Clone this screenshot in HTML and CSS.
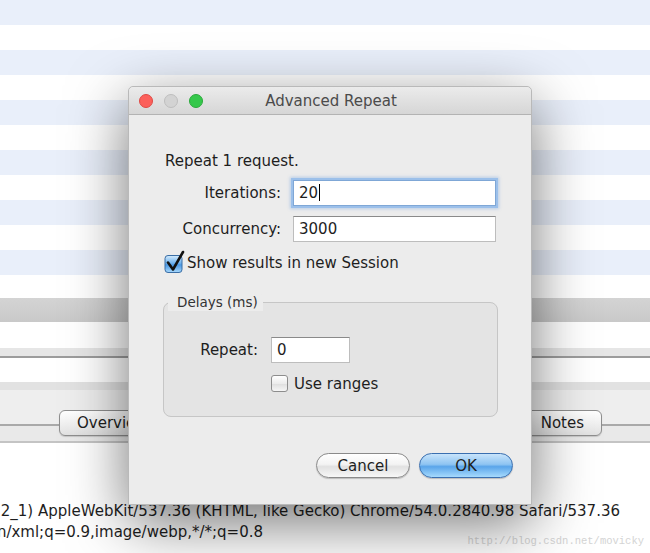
FILE: index.html
```html
<!DOCTYPE html>
<html lang="en">
<head>
    <meta charset="UTF-8">
    <title>Advanced Repeat</title>
    <link rel="stylesheet" href="styles.css">
</head>
<body>

    <div class="app">
        <div class="session-list"></div>
        <div class="splitter"></div>
        <div class="url-row"></div>
        <div class="toolbar"></div>
        <div class="blank-row"></div>
        <div class="tab-strip">
            <div class="tab">Overview</div>
            <div class="tab">Request</div>
            <div class="tab">Response</div>
            <div class="tab">Notes</div>
        </div>
        <div class="detail">
            <div class="ua-line line-1"><span>User-Agent Mozilla/5.0 (Macintosh; Intel Mac OS X 10_12_1) AppleWebKit/537.36 (KHTML, like Gecko) Chrome/54.0.2840.98 Safari/537.36</span></div>
            <div class="ua-line line-2"><span>Accept text/html,application/xhtml+xml,application/xml;q=0.9,image/webp,*/*;q=0.8</span></div>
        </div>
    </div>

    <div class="watermark">http://blog.csdn.net/movicky</div>

    <!-- the modal window -->
    <div class="dialog">
        <div class="titlebar">
            <div class="lights">
                <span class="light close"></span>
                <span class="light minimize"></span>
                <span class="light zoom"></span>
            </div>
            <div class="title">Advanced Repeat</div>
        </div>

        <div class="dialog-body">
            <div class="intro">Repeat 1 request.</div>

            <div class="form-row row-iterations">
                <label class="form-label">Iterations:</label>
                <div class="text-field focused">20<span class="caret"></span></div>
            </div>
            <div class="form-row row-concurrency">
                <label class="form-label">Concurrency:</label>
                <div class="text-field">3000</div>
            </div>

            <div class="check-row">
                <svg class="check-on" width="22" height="23" viewBox="0 0 22 23">
                    <defs>
                        <linearGradient id="aqua" x1="0" y1="0" x2="0" y2="1">
                            <stop offset="0" stop-color="#d6ecfd"/>
                            <stop offset="0.45" stop-color="#6fb2ee"/>
                            <stop offset="0.55" stop-color="#4a98e4"/>
                            <stop offset="1" stop-color="#a8d8fb"/>
                        </linearGradient>
                    </defs>
                    <rect x="2" y="5.5" width="17" height="17" rx="3" fill="url(#aqua)" stroke="#3b6ea5"/>
                    <path d="M5 12.5 L10 19.5 L20 2" fill="none" stroke="#111" stroke-width="2.6" stroke-linecap="round" stroke-linejoin="round"/>
                </svg>
                <span>Show results in new Session</span>
            </div>

            <fieldset class="group">
                <legend>Delays (ms)</legend>
                <div class="form-row row-delay">
                    <label class="form-label small-label">Repeat:</label>
                    <div class="text-field short">0</div>
                </div>
                <div class="check-row ranges">
                    <span class="check-off"></span>
                    <span>Use ranges</span>
                </div>
            </fieldset>

            <div class="buttons">
                <button class="btn">Cancel</button>
                <button class="btn default">OK</button>
            </div>
        </div>
    </div>

</body>
</html>
```

FILE: styles.css
```css
body {
    margin: 0;
    width: 650px;
    height: 553px;
    overflow: hidden;
    font-family: "DejaVu Sans", sans-serif;
    font-size: 15px;
    color: #1e1e1e;
    background: #fff;
}
.app {
    display: flex;
    flex-direction: column;
}
.session-list {
    height: 298px;
    background: repeating-linear-gradient(to bottom, #e9effa 0px, #e9effa 25px, #fff 25px, #fff 50px);
}
.splitter {
    height: 24px;
    background: linear-gradient(#d4d4d4, #c9c9c9);
}
.url-row {
    height: 26px;
    background: #fff;
}
.toolbar {
    height: 8px;
    background: #e6e6e6;
    border-bottom: 2px solid #9c9c9c;
}
.blank-row {
    height: 24px;
    background: #fff;
}
.tab-strip {
    height: 61px;
    box-sizing: border-box;
    padding: 28px 48px 0 59px;
    display: flex;
    justify-content: space-between;
    align-items: flex-start;
    background: linear-gradient(to bottom,
        #e2e2e2 0px, #e2e2e2 8px,
        #eeeeee 8px, #eeeeee 42px,
        #a9a9a9 42px, #a9a9a9 44px,
        #e9e9e9 44px, #e9e9e9 59px,
        #c4c4c4 59px, #c4c4c4 61px);
}
.tab {
    height: 26px;
    box-sizing: border-box;
    padding: 0 17px;
    line-height: 24px;
    border: 1px solid #8e8e8e;
    border-radius: 6px;
    background: linear-gradient(#ffffff, #f1f1f1 50%, #e2e2e2);
    box-shadow: 0 1px 1px rgba(0, 0, 0, 0.15);
}
.detail {
    padding-top: 58px;
    background: #fff;
}
.ua-line {
    display: flex;
    justify-content: flex-end;
    white-space: nowrap;
    overflow: hidden;
    line-height: 21px;
}
.line-1 { padding-right: 30px; }
.line-2 { padding-right: 387px; }

.watermark {
    position: absolute;
    right: 6px;
    bottom: 6px;
    font-family: "Liberation Mono", monospace;
    font-size: 10.5px;
    color: #d4d4d4;
}

/* dialog */
.dialog {
    position: absolute;
    left: 128px;
    top: 86px;
    width: 404px;
    height: 419px;
    box-sizing: border-box;
    background: #ececec;
    border: 1px solid #b9b9b9;
    border-radius: 5px 5px 0 0;
    box-shadow: 0 18px 60px rgba(0, 0, 0, 0.55);
}
.titlebar {
    height: 27px;
    display: flex;
    align-items: center;
    background: linear-gradient(#ebebeb, #d6d6d6);
    border-bottom: 1px solid #b3b3b3;
    border-radius: 5px 5px 0 0;
}
.lights {
    display: flex;
    gap: 11px;
    padding-left: 10px;
}
.light {
    width: 12px;
    height: 12px;
    border-radius: 50%;
    border: 1px solid;
}
.light.close { background: #fc605b; border-color: #df4a45; }
.light.minimize { background: #d3d3d3; border-color: #bebebe; }
.light.zoom { background: #35c84b; border-color: #2aa93b; }
.title {
    flex: 1;
    padding-right: 72px;
    text-align: center;
    color: #4b4b4b;
}

.dialog-body {
    padding: 36px 18px 0 36px;
}
.intro {
    line-height: 20px;
}
.form-row {
    display: flex;
    align-items: center;
    gap: 12px;
}
.row-iterations { margin-top: 9px; }
.row-concurrency { margin-top: 10px; }
.form-label {
    width: 116px;
    text-align: right;
}
.text-field {
    width: 203px;
    height: 26px;
    box-sizing: border-box;
    padding-left: 5px;
    line-height: 24px;
    background: #fff;
    border: 1px solid #bdbdbd;
    border-top-color: #8a8a8a;
}
.text-field.focused {
    border-color: #7fa7d6;
    box-shadow: 0 0 0 2px #9cc0ea, 0 0 3px 3px rgba(90, 150, 220, 0.35);
}
.caret {
    display: inline-block;
    width: 1px;
    height: 17px;
    margin-left: 1px;
    vertical-align: -3px;
    background: #000;
}
.check-row {
    display: flex;
    align-items: center;
    gap: 2px;
    margin-top: 10px;
    height: 22px;
}
.check-on {
    margin-left: -2px;
    margin-bottom: 4px;
}

.group {
    margin: 20px 0 0 -2px;
    padding: 26px 0 24px 0;
    width: 335px;
    box-sizing: border-box;
    border: 1px solid #c6c6c6;
    border-radius: 8px;
    background: #e4e4e4;
}
.group legend {
    margin-left: 4px;
    padding: 0 5px 0 9px;
    font-size: 13.5px;
    line-height: 17px;
    color: #333;
    background: #ececec;
    border-radius: 4px 4px 0 0;
}
.row-delay { gap: 13px; }
.small-label { width: 94px; }
.text-field.short { width: 79px; }
.check-row.ranges {
    margin-top: 12px;
    padding-left: 107px;
    height: 17px;
    gap: 6px;
}
.check-off {
    width: 17px;
    height: 17px;
    box-sizing: border-box;
    border: 1px solid #8d8d8d;
    border-radius: 3px;
    background: linear-gradient(#ffffff, #ececec 50%, #dedede 51%, #f6f6f6);
}

.buttons {
    display: flex;
    justify-content: flex-end;
    gap: 9px;
    margin-top: 36px;
}
.btn {
    width: 94px;
    height: 25px;
    font-family: "DejaVu Sans", sans-serif;
    font-size: 15px;
    color: #1e1e1e;
    border: 1px solid #8a8a8a;
    border-radius: 13px;
    background: linear-gradient(#ffffff, #f3f3f3 45%, #e1e1e1 55%, #f7f7f7);
    box-shadow: 0 1px 1px rgba(0, 0, 0, 0.2);
    padding: 0;
}
.btn.default {
    border-color: #3a6fb0;
    background: linear-gradient(#c8e4fb, #8ec4f2 45%, #5aa5ea 55%, #a6dafd);
}
```
